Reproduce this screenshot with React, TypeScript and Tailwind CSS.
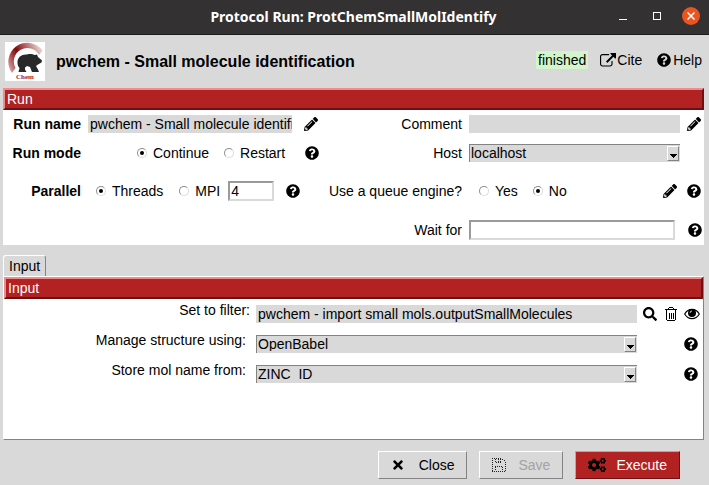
import type { ReactNode } from "react";
import { FaCogs, FaPencilAlt, FaQuestionCircle, FaSearch, FaTimes } from "react-icons/fa";

function ExternalLinkIcon() {
  return (
    <svg viewBox="0 0 1792 1792" className="size-4 shrink-0" fill="currentColor" aria-hidden="true">
      <path d="M1408 928v320q0 119-84.5 203.5t-203.5 84.5h-832q-119 0-203.5-84.5t-84.5-203.5v-832q0-119 84.5-203.5t203.5-84.5h704q14 0 23 9t9 23v64q0 14-9 23t-23 9h-704q-66 0-113 47t-47 113v832q0 66 47 113t113 47h832q66 0 113-47t47-113v-320q0-14 9-23t23-9h64q14 0 23 9t9 23zm384-864v512q0 26-19 45t-45 19-45-19l-176-176-652 652q-10 10-23 10t-23-10l-114-114q-10-10-10-23t10-23l652-652-176-176q-19-19-19-45t19-45 45-19h512q26 0 45 19t19 45z" transform="translate(0 100)" />
    </svg>
  );
}

function TrashIcon() {
  return (
    <svg viewBox="0 0 12 14" className="h-3.5 w-3" fill="none" stroke="currentColor" shapeRendering="crispEdges" aria-hidden="true">
      <path d="M0 2.5h12M3.5 2.5v-1l1-1h3l1 1v1M1.5 3v9.5l1 1h7l1-1v-9.5M4.5 5.5v6M6.5 5.5v6M8.5 5.5v6" />
    </svg>
  );
}

function EyeIcon() {
  return (
    <svg viewBox="0 0 16 12" className="h-3 w-4" aria-hidden="true">
      <path d="M0.7 6C2.4 3 5 1.3 8 1.3S13.600 3 15.300 6C13.600 9 11 10.700 8 10.700S2.400 9 0.700 6Z" fill="none" stroke="#000" strokeWidth="1.200" />
      <circle cx="8" cy="5" r="4" fill="#000" />
      <path d="M6 5a2 2 0 0 1 2-2" fill="none" stroke="#fff" strokeWidth="0.800" />
    </svg>
  );
}

function SaveIcon() {
  return (
    <svg viewBox="0 0 14 14" className="size-3.5" fill="none" stroke="#222" strokeDasharray="1 1" shapeRendering="crispEdges" aria-hidden="true">
      <path d="M0 0.500h10M10.500 1l3 3M13.500 4v10M0 13.500h14M0.500 0v14M3.500 1v4M4 4.500h5M8.500 1v4M6.500 1v3M3.500 9v4M3 8.500h8M10.500 9v4" />
    </svg>
  );
}

function Logo() {
  return (
    <svg viewBox="0 0 40 39" className="h-[39px] w-10 shrink-0 bg-white" role="img" aria-label="Chem">
      <defs>
        <linearGradient id="arch" gradientUnits="userSpaceOnUse" x1="4" y1="30" x2="37" y2="12">
          <stop offset="0" stopColor="#dcb4b4" />
          <stop offset="0.300" stopColor="#a23b3e" />
          <stop offset="0.450" stopColor="#7c0c10" />
          <stop offset="0.700" stopColor="#b15d5f" />
          <stop offset="1" stopColor="#e3c6c6" />
        </linearGradient>
      </defs>
      <path d="M7 31A18.500 18.500 0 0 1 37.500 8.500L34 13A13 13 0 0 0 10.500 26Z" fill="url(#arch)" />
      <path d="M12.500 20C12.500 15 17 12 22 12.500C25 11.500 28 12.500 30 13L32 12.500L33 15L37 18.500L36.500 20.500L33 22.500L31 24L33 27.500L34 30L27 30L26 27.500L25 25L22 24L20 25.500L20 27.500L21.500 30L13.500 30L14.500 26C13 24.500 12.300 22 12.500 20Z" fill="#282828" />
      <text x="20" y="37" textAnchor="middle" fontFamily="Liberation Serif, serif" fontSize="7" fontWeight="700" fill="#b01d20">Chem</text>
    </svg>
  );
}

function HelpButton() {
  return (
    <button type="button" aria-label="Help" className="block shrink-0">
      <FaQuestionCircle className="size-3.5" />
    </button>
  );
}

function EditButton() {
  return (
    <button type="button" aria-label="Edit" className="block shrink-0">
      <FaPencilAlt className="size-3.5" />
    </button>
  );
}

function Radio({ name, label, checked = false }: { name: string; label: string; checked?: boolean }) {
  return (
    <label className="flex items-center gap-1.5">
      <input
        type="radio"
        name={name}
        defaultChecked={checked}
        className="grid size-2.5 shrink-0 appearance-none place-items-center rounded-full border border-[#dcdcdc] border-t-[#8f8f8f] border-l-[#8f8f8f] checked:before:block checked:before:size-1 checked:before:rounded-full checked:before:bg-black checked:before:content-['']"
      />
      {label}
    </label>
  );
}

function Select({ id, value }: { id: string; value: string }) {
  return (
    <div className="relative min-w-0 flex-1">
      <select
        id={id}
        className="block h-[18px] w-full appearance-none border-t border-l border-[#838383] bg-[#d9d9d9] pb-0.5 pl-px leading-4 outline-none"
      >
        <option>{value}</option>
      </select>
      <span className="pointer-events-none absolute top-0.5 right-px flex h-[15px] w-3 items-end justify-center border border-white border-r-[#838383] border-b-[#838383] pb-0.5">
        <svg viewBox="0 0 7 4" className="h-1 w-[7px] shrink-0" shapeRendering="crispEdges" aria-hidden="true">
          <path d="M0 0h7L3.500 4z" />
        </svg>
      </span>
    </div>
  );
}

function SectionTitle({ children }: { children: ReactNode }) {
  return (
    <h2 className="h-[22px] border-2 border-[#f08c8c] border-r-[#6b1013] border-b-[#6b1013] bg-[#b22222] pl-0.5 leading-[18px] text-white">
      {children}
    </h2>
  );
}

const formRow = "grid grid-cols-[78px_232px_135px_minmax(0,1fr)] items-center gap-x-[7px]";
const paramRow = "grid grid-cols-[242px_minmax(0,1fr)_56px] gap-x-2.5 h-[30px]";

export default function App() {
  return (
    <div className="flex min-h-screen flex-col bg-[#d9d9d9] font-['Liberation_Sans',Arial,sans-serif] text-sm leading-4 text-black">
      <header className="relative flex h-[35px] items-center justify-center border-b border-[#1d1b1c] bg-[#333132]">
        <h1 className="pr-0.5 font-['Noto_Sans',sans-serif] text-sm font-bold text-white">
          Protocol Run: ProtChemSmallMolIdentify
        </h1>
        <div className="absolute inset-y-0 right-[9px] flex items-center pb-0.5 text-white">
          <button type="button" aria-label="Minimize" className="mr-[26px] flex h-2 w-2 items-end">
            <span className="h-px w-2 bg-white" />
          </button>
          <button type="button" aria-label="Maximize" className="mr-[21px] size-2 border border-white" />
          <button type="button" aria-label="Close window" className="flex size-[18px] items-center justify-center rounded-full bg-[#e95420]">
            <svg viewBox="0 0 8 8" className="size-2" stroke="#fff" strokeWidth="1.500" aria-hidden="true">
              <path d="M0.500 0.500l7 7M7.500 0.500l-7 7" />
            </svg>
          </button>
        </div>
      </header>

      <div className="flex h-[53px] items-center pr-[7px] pl-[5px]">
        <Logo />
        <h2 className="ml-[11px] flex-1 text-base font-bold">pwchem - Small molecule identification</h2>
        <div className="flex items-center pb-1">
          <span className="mr-3 bg-[#d2f5cb] px-0.5 py-px">finished</span>
          <a href="#cite" className="mr-[15px] flex items-center gap-px">
            <ExternalLinkIcon />
            Cite
          </a>
          <a href="#help" className="flex items-center gap-0.5">
            <FaQuestionCircle className="size-3.5" />
            Help
          </a>
        </div>
      </div>

      <section className="mr-[5px] ml-[3px] bg-white">
        <SectionTitle>Run</SectionTitle>
        <div className={`${formRow} h-7`}>
          <label htmlFor="run-name" className="text-right font-bold whitespace-nowrap">Run name</label>
          <div className="flex items-center gap-3">
            <input id="run-name" defaultValue="pwchem - Small molecule identification" className="h-[18px] w-[204px] bg-[#d9d9d9] pl-0.5 outline-none" />
            <EditButton />
          </div>
          <label htmlFor="comment" className="text-right">Comment</label>
          <div className="flex items-center gap-[7px] pr-[3px]">
            <input id="comment" className="h-[18px] min-w-0 flex-1 bg-[#d9d9d9] px-0.5 outline-none" />
            <EditButton />
          </div>
        </div>
        <div className={`${formRow} h-[30px]`}>
          <span className="text-right font-bold whitespace-nowrap">Run mode</span>
          <div className="flex items-center pl-[49px]">
            <Radio name="mode" label="Continue" checked />
            <span className="w-[15px]" />
            <Radio name="mode" label="Restart" />
            <span className="w-5" />
            <HelpButton />
          </div>
          <label htmlFor="host" className="text-right">Host</label>
          <div className="flex pr-6">
            <Select id="host" value="localhost" />
          </div>
        </div>
        <div className={`${formRow} h-[46px]`}>
          <span className="text-right font-bold">Parallel</span>
          <div className="flex items-center pl-2">
            <Radio name="parallel" label="Threads" checked />
            <span className="w-4" />
            <Radio name="parallel" label="MPI" />
            <input aria-label="Number of threads" defaultValue="4" className="ml-2 h-5 w-[46px] border-2 border-[#d9d9d9] border-t-[#9a9a9a] border-l-[#9a9a9a] bg-white pl-px outline-none" />
            <span className="w-3" />
            <HelpButton />
          </div>
          <span className="text-right whitespace-nowrap">Use a queue engine?</span>
          <div className="flex items-center pr-[3px] pl-2.5">
            <Radio name="queue" label="Yes" />
            <span className="w-[15px]" />
            <Radio name="queue" label="No" checked />
            <div className="ml-auto flex gap-2.5">
              <EditButton />
              <HelpButton />
            </div>
          </div>
        </div>
        <div className={`${formRow} h-[31px]`}>
          <label htmlFor="wait-for" className="col-start-3 text-right">Wait for</label>
          <div className="flex items-center gap-[13px] pr-0.5">
            <input id="wait-for" className="h-5 min-w-0 flex-1 border-2 border-[#d9d9d9] border-t-[#9a9a9a] border-l-[#9a9a9a] bg-white px-0.5 outline-none" />
            <HelpButton />
          </div>
        </div>
      </section>

      <div role="tablist" className="mt-2.5 ml-[3px] flex">
        <button type="button" role="tab" aria-selected="true" className="h-[21px] rounded-t-[3px] border-t border-r border-l border-white border-r-[#838383] px-[5px] leading-5">
          Input
        </button>
      </div>
      <section className="mr-[5px] ml-[3px] flex-1 border border-white border-r-[#838383] border-b-[#838383] bg-white">
        <SectionTitle>Input</SectionTitle>
        <div className="pt-1.5">
          <div className={paramRow}>
            <label htmlFor="set-to-filter" className="-mt-[3px] -mr-1 text-right">Set to filter:</label>
            <input id="set-to-filter" defaultValue="pwchem - import small mols.outputSmallMolecules" className="h-[18px] w-full bg-[#d9d9d9] pl-0.5 outline-none" />
            <div className="-ml-1 flex h-[18px] items-center justify-between pr-[3px]">
              <button type="button" aria-label="Search"><FaSearch className="size-3.5" /></button>
              <button type="button" aria-label="Delete"><TrashIcon /></button>
              <button type="button" aria-label="View"><EyeIcon /></button>
            </div>
          </div>
          <div className={paramRow}>
            <label htmlFor="manage" className="-mt-[3px] text-right">Manage structure using:</label>
            <Select id="manage" value="OpenBabel" />
            <div className="flex h-[18px] items-center justify-end pr-[5px]"><HelpButton /></div>
          </div>
          <div className={paramRow}>
            <label htmlFor="store" className="-mt-[3px] text-right">Store mol name from:</label>
            <Select id="store" value={"ZINC\u00a0\u00a0ID"} />
            <div className="flex h-[18px] items-center justify-end pr-[5px]"><HelpButton /></div>
          </div>
        </div>
      </section>

      <footer className="flex h-[45px] items-start justify-end gap-3 pt-[11px] pr-[29px]">
        <button type="button" className="flex h-7 items-center gap-3.5 border border-white border-r-[#838383] border-b-[#838383] px-3">
          <FaTimes className="size-3.5" />
          Close
        </button>
        <button type="button" disabled className="flex h-7 items-center gap-3 border border-white border-r-[#838383] border-b-[#838383] px-3 text-[#a3a3a3]">
          <SaveIcon />
          Save
        </button>
        <button type="button" className="flex h-7 items-center gap-2.5 border border-[#f08c8c] border-r-[#6b1013] border-b-[#6b1013] bg-[#b22222] px-3 text-white">
          <FaCogs className="size-[18px] text-black" />
          Execute
        </button>
      </footer>
    </div>
  );
}
